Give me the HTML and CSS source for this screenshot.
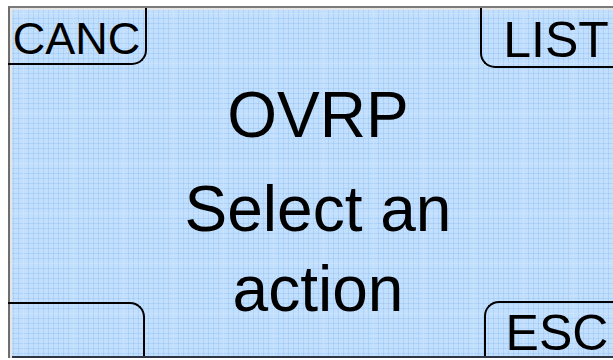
FILE: index.html
```html
<!DOCTYPE html>
<html lang="en">
<head>
    <meta charset="UTF-8">
    <meta name="viewport" content="width=device-width, initial-scale=1.0">
    <title>OVRP</title>
    <link rel="stylesheet" href="styles.css">
</head>
<body>
    <div class="frame">
        <div class="screen">
            <div class="message">
                <div class="title">OVRP</div>
                <div class="prompt">Select an<br>action</div>
            </div>

            <div class="softkey key-tl">CANC</div>
            <div class="softkey key-tr">LIST</div>
            <div class="softkey key-bl"></div>
            <div class="softkey key-br">ESC</div>
        </div>
    </div>
</body>
</html>
```

FILE: styles.css
```css
html,
body {
    margin: 0;
    height: 360px;
    overflow: hidden;
    background-color: white;
}
body {
    font-family: "Liberation Sans", Arial, sans-serif;
    color: black;
}
.frame {
    width: 616px;
    margin: 6px 0 0 8px;
    padding: 2px 0 0 2px;
    border-top: 2px solid #7a7a7a;
    border-left: 2px solid #6e6e6e;
    background-color: #e4e4e4;
}
.screen {
    display: grid;
    grid-template-columns: 140px 1fr 150px;
    grid-template-rows: 57px 1fr 55px;
    width: 612px;
    height: 346px;
    border-bottom: 2px solid #2c3644;
    background-color: #c2dffd;
    background-image:
        linear-gradient(to right, rgba(236, 246, 255, 0.45) 1px, transparent 1px),
        linear-gradient(to bottom, rgba(236, 246, 255, 0.45) 1px, transparent 1px),
        linear-gradient(to right, rgba(130, 180, 235, 0.3) 1px, transparent 1px),
        linear-gradient(to bottom, rgba(130, 180, 235, 0.3) 1px, transparent 1px);
    background-size: 50px 50px, 50px 50px, 5px 5px, 5px 5px;
    background-position: 11px 3px, 11px 3px, 1px 3px, 1px 3px;
}
.message {
    grid-row: 1 / -1;
    grid-column: 1 / -1;
    padding-top: 65px;
    text-align: center;
    font-size: 64px;
    line-height: 80px;
}
.title {
    margin-bottom: 14px;
}
.softkey {
    font-size: 50px;
    line-height: 0.9;
    display: flex;
    align-items: flex-start;
    justify-content: center;
    border: 0 solid black;
}
.key-tl {
    grid-row: 1;
    grid-column: 1;
    margin: -2px 5px 2px -4px;
    border-right-width: 2px;
    border-bottom-width: 2px;
    border-bottom-right-radius: 15px;
    padding-top: 11px;
    font-size: 45px;
}
.key-tr {
    grid-row: 1;
    grid-column: 3;
    margin: -2px 0 -1px 6px;
    border-left-width: 2px;
    border-bottom-width: 2px;
    border-bottom-left-radius: 15px;
    padding: 10px 0 0 6px;
}
.key-bl {
    grid-row: 3;
    grid-column: 1;
    margin: 1px 7px 0 -4px;
    border-top-width: 2px;
    border-right-width: 2px;
    border-top-right-radius: 15px;
}
.key-br {
    grid-row: 3;
    grid-column: 3;
    margin: 0 0 0 10px;
    border-top-width: 2px;
    border-left-width: 2px;
    border-top-left-radius: 15px;
    padding: 8px 0 0 4px;
}
```
